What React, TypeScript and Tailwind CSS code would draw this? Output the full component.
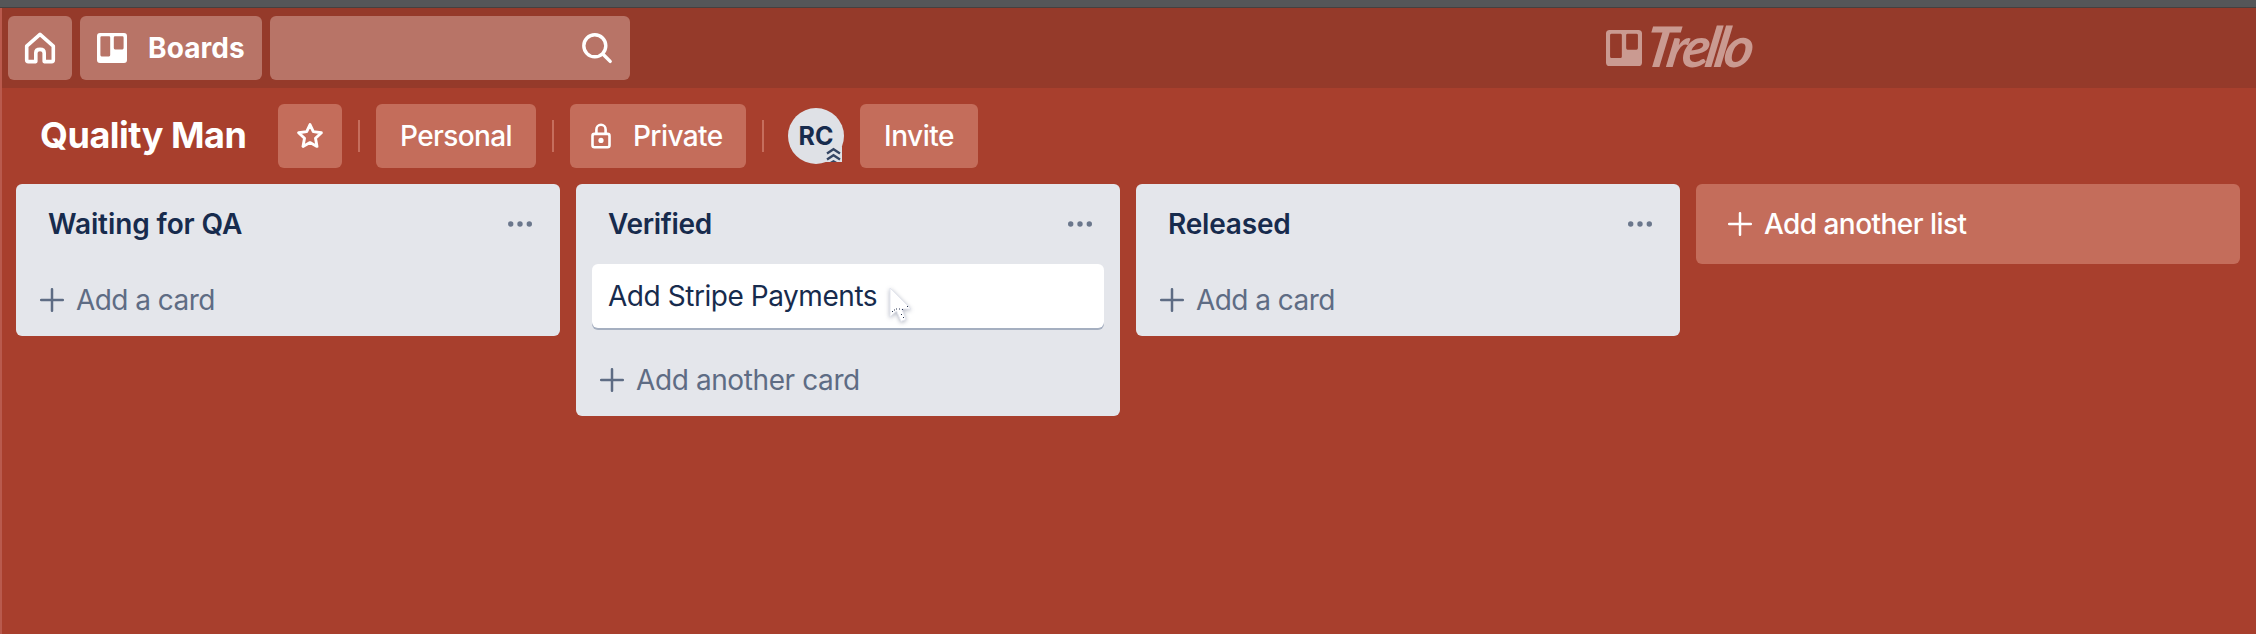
import type { ReactNode } from "react";

function HomeIcon() {
  return (
    <svg width="32" height="32" viewBox="0 0 32 32" fill="none" stroke="#fff" strokeWidth="3.6" strokeLinejoin="round" strokeLinecap="round">
      <path d="M2.7 14.2 L16 2.4 L29.3 14.2 V28 Q29.3 29.6 27.7 29.6 H20.2 V21 Q20.2 17.4 16 17.4 Q11.8 17.4 11.8 21 V29.6 H4.3 Q2.7 29.6 2.7 28 Z" />
    </svg>
  );
}

function BoardIcon({ className }: { className: string }) {
  return (
    <svg className={className} viewBox="0 0 30 30" fill="currentColor" fillRule="evenodd">
      <path d="M3 0 H27 Q30 0 30 3 V27 Q30 30 27 30 H3 Q0 30 0 27 V3 Q0 0 3 0 Z M4.6 3.2 Q3.4 3.2 3.4 4.4 V22 Q3.4 23.4 4.6 23.4 H12 Q13.2 23.4 13.2 22 V4.4 Q13.2 3.2 12 3.2 Z M18 3.2 Q16.8 3.2 16.8 4.4 V15 Q16.8 16.4 18 16.4 H25.4 Q26.6 16.4 26.6 15 V4.4 Q26.6 3.2 25.4 3.2 Z" />
    </svg>
  );
}

function SearchIcon() {
  return (
    <svg width="32" height="32" viewBox="0 0 32 32" fill="none" stroke="#fff" strokeWidth="3.4" strokeLinecap="round">
      <circle cx="12.8" cy="13.8" r="11" />
      <path d="M20.8 22 L28.2 29.4" />
    </svg>
  );
}

function StarIcon() {
  return (
    <svg width="28" height="28" viewBox="0 0 28 28" fill="none" stroke="#fff" strokeWidth="2.9" strokeLinejoin="round">
      <path d="M14 2.6 L17.3 9.6 L25.4 10.7 L19.5 16.3 L21 24.4 L14 20.6 L7 24.4 L8.5 16.3 L2.6 10.7 L10.7 9.6 Z" />
    </svg>
  );
}

function LockIcon() {
  return (
    <svg width="20" height="26" viewBox="0 0 20 26" fill="none" stroke="#fff" strokeWidth="2.6">
      <rect x="1.5" y="10.9" width="17" height="13.4" rx="2" />
      <path d="M5.4 10.4 V6.4 A4.6 4.6 0 0 1 14.6 6.4 V10.4" />
      <circle cx="10" cy="17.4" r="2.6" fill="#fff" stroke="none" />
    </svg>
  );
}

function PlusIcon() {
  return (
    <svg className="shrink-0" width="24" height="24" viewBox="0 0 24 24" fill="none" stroke="currentColor" strokeWidth="2.5" strokeLinecap="round">
      <path d="M12 1.2 V22.8 M1.2 12 H22.8" />
    </svg>
  );
}

function DotsIcon() {
  return (
    <svg width="24" height="6" viewBox="0 0 24 6" fill="#6b778c">
      <circle cx="2.7" cy="3" r="2.7" />
      <circle cx="12" cy="3" r="2.7" />
      <circle cx="21.3" cy="3" r="2.7" />
    </svg>
  );
}

function Pointer() {
  return (
    <svg className="absolute left-[295px] top-[20px] drop-shadow-[0_1px_2px_rgba(60,70,100,0.4)]" width="30" height="44" viewBox="0 0 30 44">
      <path d="M3 4 V33 L9.5 27 L14 37.5 L19 35.4 L14.8 25 H24 Z" fill="#fff" stroke="#e4e6ee" strokeWidth="1" />
      <path d="M5 27.5 h1 M7 26 h1 M9 25 h1 M12 25 h1 M15 25.5 h1 M20 22.5 h1 M14 30.5 h1 M16 33.5 h1" stroke="#263350" strokeWidth="1" />
    </svg>
  );
}

function Divider() {
  return <div className="h-8 w-[2px] bg-[#c66e5d]" />;
}

function List({ title, titleClass, addLabel, addClass, children }: { title: string; titleClass: string; addLabel: string; addClass: string; children?: ReactNode }) {
  return (
    <section className="w-[544px] shrink-0 rounded-md bg-[#e4e6eb]">
      <header className="flex h-20 items-center justify-between pl-8 pr-7">
        <h2 className={`text-[28px] leading-8 font-semibold text-[#172b4d] ${titleClass}`}>{title}</h2>
        <DotsIcon />
      </header>
      {children}
      <button className="flex h-[72px] w-full items-center gap-3 pl-6 text-[#5e6c84]">
        <PlusIcon />
        <span className={`text-[28px] leading-8 ${addClass}`}>{addLabel}</span>
      </button>
    </section>
  );
}

export default function App() {
  return (
    <div className="flex h-[634px] w-[2256px] flex-col overflow-hidden bg-[#a83f2d] font-['Inter',sans-serif] whitespace-nowrap">
      <div className="h-2 shrink-0 border-b border-[#47403f] bg-[#555658]" />
      <div className="flex min-h-0 flex-1 flex-col border-l-2 border-[#b95a4d]">
        <nav className="flex h-20 shrink-0 items-center gap-2 bg-[#953a2a] pl-[6px]">
          <button className="flex size-16 items-center justify-center rounded-md bg-[#b87467]">
            <HomeIcon />
          </button>
          <button className="flex h-16 w-[182px] items-center rounded-md bg-[#b87467] pl-[17px] text-white">
            <BoardIcon className="size-[30px]" />
            <span className="ml-[21px] text-[28px] leading-8 font-bold tracking-[0.1px]">Boards</span>
          </button>
          <div className="flex h-16 w-[360px] items-center justify-end rounded-md bg-[#b87467] pr-4">
            <SearchIcon />
          </div>
          <div className="ml-[968px] flex items-center text-[#ca9a91]">
            <BoardIcon className="size-9" />
            <span className="mb-[5px] ml-[4px] inline-block origin-left -skew-x-10 font-['Lato',sans-serif] text-[56px] leading-[48px] font-bold tracking-[-4px] italic">Trello</span>
          </div>
        </nav>

        <div className="flex h-24 shrink-0 items-center pl-[38px] text-[28px] leading-8 font-medium tracking-[-0.6px] text-white">
          <h1 className="w-[238px] pb-[2px] text-[36px] leading-10 font-bold tracking-[-0.5px]">Quality Man</h1>
          <button className="flex size-16 items-center justify-center rounded-md bg-[#c46d5b]">
            <StarIcon />
          </button>
          <div className="flex w-[34px] justify-center">
            <Divider />
          </div>
          <button className="flex h-16 w-[160px] items-center justify-center rounded-md bg-[#c46d5b]">Personal</button>
          <div className="flex w-[34px] justify-center">
            <Divider />
          </div>
          <button className="flex h-16 w-[176px] items-center rounded-md bg-[#c46d5b] pl-[21px]">
            <LockIcon />
            <span className="ml-[22px]">Private</span>
          </button>
          <div className="ml-4">
            <Divider />
          </div>
          <div className="relative ml-6 flex size-14 items-center justify-center rounded-full bg-[#dfe1e6] text-[25px] font-bold tracking-normal text-[#172b4d]">
            RC
            <svg className="absolute right-[2px] bottom-[1px]" width="17" height="16" viewBox="0 0 17 16" fill="none">
              <path d="M0 14 L9 0 H17 V15 H0 Z" fill="#dfe1e6" />
              <path d="M2 6.5 L8.5 2.2 L15 6.5 M2 12.5 L8.5 8.2 L15 12.5" stroke="#344563" strokeWidth="2.3" />
              <path d="M5 15 L8.5 13 L12 15 Z" fill="#344563" />
            </svg>
          </div>
          <button className="ml-4 flex h-16 w-[118px] items-center justify-center rounded-md bg-[#c46d5b] tracking-[-0.5px]">Invite</button>
        </div>

        <main className="flex items-start gap-4 pl-[14px]">
          <List title="Waiting for QA" titleClass="tracking-[-0.1px]" addLabel="Add a card" addClass="tracking-[-0.55px]" />
          <List title="Verified" titleClass="tracking-[-0.3px]" addLabel="Add another card" addClass="tracking-[-0.4px]">
            <article className="relative mx-4 mb-4 flex h-16 items-center rounded-md bg-white px-4 text-[28px] tracking-[-0.45px] text-[#172b4d] shadow-[0_2px_0_#a5afc0]">
              <span>Add Stripe Payments</span>
              <Pointer />
            </article>
          </List>
          <List title="Released" titleClass="tracking-[-0.2px]" addLabel="Add a card" addClass="tracking-[-0.55px]" />
          <button className="flex h-20 w-[544px] shrink-0 items-center gap-3 rounded-md bg-[#c46d5b] pl-8 text-[28px] leading-8 font-medium tracking-[-0.55px] text-white">
            <PlusIcon />
            <span>Add another list</span>
          </button>
        </main>
      </div>
    </div>
  );
}
